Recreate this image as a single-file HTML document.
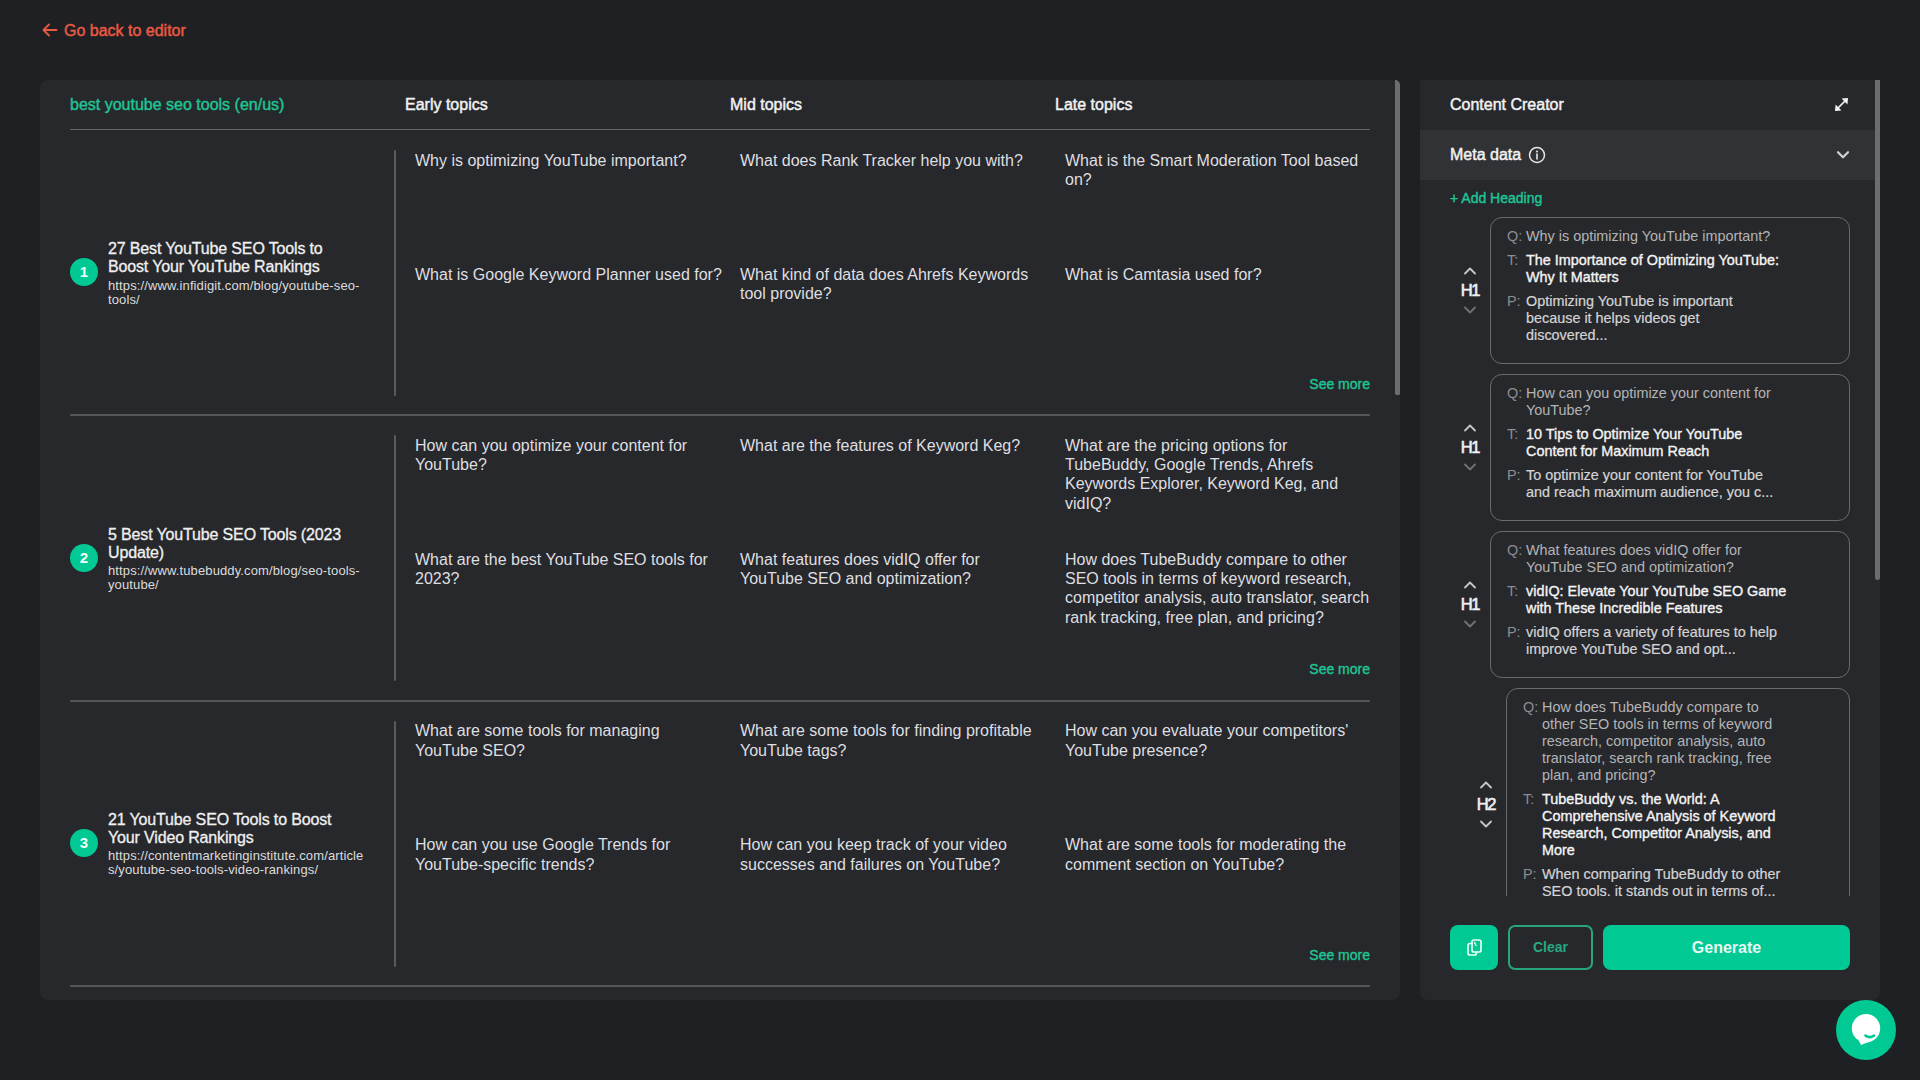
<!DOCTYPE html><html><head><meta charset="utf-8"><style>
html,body{margin:0;padding:0;width:1920px;height:1080px;overflow:hidden;background:#1f2024;}
body{font-family:"Liberation Sans",sans-serif;position:relative;}
.t{position:absolute;white-space:nowrap;}
.abs{position:absolute;}
</style></head><body>
<svg class="abs" style="left:40px;top:20px" width="20" height="20" viewBox="0 0 20 20"><path d="M16.5 10H3.5M9 4.5L3.5 10L9 15.5" stroke="#e85a43" stroke-width="1.8" fill="none" stroke-linecap="round" stroke-linejoin="round"/></svg>
<div class="t" style="left:64px;top:20.96px;font-size:16px;line-height:19px;color:#e85a43;font-weight:400;-webkit-text-stroke:0.45px #e85a43;">Go back to editor</div>
<div class="abs" style="left:40px;top:80px;width:1360px;height:920px;background:#27282c;border-radius:8px;"></div>
<div class="abs" style="left:1395px;top:80px;width:5px;height:314.5px;background:#6c6d71;border-radius:0 8px 3px 3px;"></div>
<div class="t" style="left:70px;top:95.26px;font-size:16px;line-height:19px;color:#1ec695;font-weight:400;-webkit-text-stroke:0.4px #1ec695;">best youtube seo tools (en/us)</div>
<div class="t" style="left:405px;top:95.26px;font-size:16px;line-height:19px;color:#f2f2f2;font-weight:400;-webkit-text-stroke:0.45px #f2f2f2;">Early topics</div>
<div class="t" style="left:730px;top:95.26px;font-size:16px;line-height:19px;color:#f2f2f2;font-weight:400;-webkit-text-stroke:0.45px #f2f2f2;">Mid topics</div>
<div class="t" style="left:1055px;top:95.26px;font-size:16px;line-height:19px;color:#f2f2f2;font-weight:400;-webkit-text-stroke:0.45px #f2f2f2;">Late topics</div>
<div class="abs" style="left:70px;top:129px;width:1300px;height:1px;background:#65666a;"></div>
<div class="abs" style="left:70px;top:258.2px;width:28px;height:28px;border-radius:50%;background:#00c993;color:#f4fffb;font-size:15px;font-weight:700;line-height:28px;text-align:center;">1</div>
<div class="t" style="left:108px;top:240.16px;font-size:16px;line-height:18px;color:#f0f0f0;font-weight:400;letter-spacing:-0.15px;-webkit-text-stroke:0.3px #f0f0f0;">27 Best YouTube SEO Tools to<br>Boost Your YouTube Rankings</div>
<div class="t" style="left:108px;top:278.50px;font-size:13px;line-height:14px;color:#dcdcdc;font-weight:400;letter-spacing:0.12px;">https://www.infidigit.com/blog/youtube-seo-<br>tools/</div>
<div class="abs" style="left:393.5px;top:149.7px;width:2.5px;height:246px;background:#5a5b5f;border-radius:2px;"></div>
<div class="t" style="left:415px;top:150.56px;font-size:16px;line-height:19.2px;color:#dedfe0;font-weight:400;">Why is optimizing YouTube important?</div>
<div class="t" style="left:740px;top:150.56px;font-size:16px;line-height:19.2px;color:#dedfe0;font-weight:400;">What does Rank Tracker help you with?</div>
<div class="t" style="left:1065px;top:150.56px;font-size:16px;line-height:19.2px;color:#dedfe0;font-weight:400;">What is the Smart Moderation Tool based<br>on?</div>
<div class="t" style="left:415px;top:264.56px;font-size:16px;line-height:19.2px;color:#dedfe0;font-weight:400;">What is Google Keyword Planner used for?</div>
<div class="t" style="left:740px;top:264.56px;font-size:16px;line-height:19.2px;color:#dedfe0;font-weight:400;">What kind of data does Ahrefs Keywords<br>tool provide?</div>
<div class="t" style="left:1065px;top:264.56px;font-size:16px;line-height:19.2px;color:#dedfe0;font-weight:400;">What is Camtasia used for?</div>
<div class="t" style="right:550px;text-align:right;top:375.95px;font-size:14px;line-height:17px;color:#1ec695;font-weight:400;-webkit-text-stroke:0.35px #1ec695;">See more</div>
<div class="abs" style="left:70px;top:414.1px;width:1300px;height:2px;background:#55565a;border-radius:1px;"></div>
<div class="abs" style="left:70px;top:543.5999999999999px;width:28px;height:28px;border-radius:50%;background:#00c993;color:#f4fffb;font-size:15px;font-weight:700;line-height:28px;text-align:center;">2</div>
<div class="t" style="left:108px;top:525.56px;font-size:16px;line-height:18px;color:#f0f0f0;font-weight:400;letter-spacing:-0.15px;-webkit-text-stroke:0.3px #f0f0f0;">5 Best YouTube SEO Tools (2023<br>Update)</div>
<div class="t" style="left:108px;top:563.90px;font-size:13px;line-height:14px;color:#dcdcdc;font-weight:400;letter-spacing:0.12px;">https://www.tubebuddy.com/blog/seo-tools-<br>youtube/</div>
<div class="abs" style="left:393.5px;top:435.09999999999997px;width:2.5px;height:246px;background:#5a5b5f;border-radius:2px;"></div>
<div class="t" style="left:415px;top:435.96px;font-size:16px;line-height:19.2px;color:#dedfe0;font-weight:400;">How can you optimize your content for<br>YouTube?</div>
<div class="t" style="left:740px;top:435.96px;font-size:16px;line-height:19.2px;color:#dedfe0;font-weight:400;">What are the features of Keyword Keg?</div>
<div class="t" style="left:1065px;top:435.96px;font-size:16px;line-height:19.2px;color:#dedfe0;font-weight:400;">What are the pricing options for<br>TubeBuddy, Google Trends, Ahrefs<br>Keywords Explorer, Keyword Keg, and<br>vidIQ?</div>
<div class="t" style="left:415px;top:549.96px;font-size:16px;line-height:19.2px;color:#dedfe0;font-weight:400;">What are the best YouTube SEO tools for<br>2023?</div>
<div class="t" style="left:740px;top:549.96px;font-size:16px;line-height:19.2px;color:#dedfe0;font-weight:400;">What features does vidIQ offer for<br>YouTube SEO and optimization?</div>
<div class="t" style="left:1065px;top:549.96px;font-size:16px;line-height:19.2px;color:#dedfe0;font-weight:400;">How does TubeBuddy compare to other<br>SEO tools in terms of keyword research,<br>competitor analysis, auto translator, search<br>rank tracking, free plan, and pricing?</div>
<div class="t" style="right:550px;text-align:right;top:661.35px;font-size:14px;line-height:17px;color:#1ec695;font-weight:400;-webkit-text-stroke:0.35px #1ec695;">See more</div>
<div class="abs" style="left:70px;top:699.5px;width:1300px;height:2px;background:#55565a;border-radius:1px;"></div>
<div class="abs" style="left:70px;top:829.0px;width:28px;height:28px;border-radius:50%;background:#00c993;color:#f4fffb;font-size:15px;font-weight:700;line-height:28px;text-align:center;">3</div>
<div class="t" style="left:108px;top:810.96px;font-size:16px;line-height:18px;color:#f0f0f0;font-weight:400;letter-spacing:-0.15px;-webkit-text-stroke:0.3px #f0f0f0;">21 YouTube SEO Tools to Boost<br>Your Video Rankings</div>
<div class="t" style="left:108px;top:849.30px;font-size:13px;line-height:14px;color:#dcdcdc;font-weight:400;letter-spacing:0.12px;">https://contentmarketinginstitute.com/article<br>s/youtube-seo-tools-video-rankings/</div>
<div class="abs" style="left:393.5px;top:720.5px;width:2.5px;height:246px;background:#5a5b5f;border-radius:2px;"></div>
<div class="t" style="left:415px;top:721.36px;font-size:16px;line-height:19.2px;color:#dedfe0;font-weight:400;">What are some tools for managing<br>YouTube SEO?</div>
<div class="t" style="left:740px;top:721.36px;font-size:16px;line-height:19.2px;color:#dedfe0;font-weight:400;">What are some tools for finding profitable<br>YouTube tags?</div>
<div class="t" style="left:1065px;top:721.36px;font-size:16px;line-height:19.2px;color:#dedfe0;font-weight:400;">How can you evaluate your competitors'<br>YouTube presence?</div>
<div class="t" style="left:415px;top:835.36px;font-size:16px;line-height:19.2px;color:#dedfe0;font-weight:400;">How can you use Google Trends for<br>YouTube-specific trends?</div>
<div class="t" style="left:740px;top:835.36px;font-size:16px;line-height:19.2px;color:#dedfe0;font-weight:400;">How can you keep track of your video<br>successes and failures on YouTube?</div>
<div class="t" style="left:1065px;top:835.36px;font-size:16px;line-height:19.2px;color:#dedfe0;font-weight:400;">What are some tools for moderating the<br>comment section on YouTube?</div>
<div class="t" style="right:550px;text-align:right;top:946.75px;font-size:14px;line-height:17px;color:#1ec695;font-weight:400;-webkit-text-stroke:0.35px #1ec695;">See more</div>
<div class="abs" style="left:70px;top:984.9px;width:1300px;height:2px;background:#55565a;border-radius:1px;"></div>
<div class="abs" style="left:1420px;top:80px;width:460px;height:920px;background:#27282c;border-radius:0 0 8px 8px;overflow:hidden;"><div class="abs" style="left:0;top:50px;width:455px;height:50px;background:#313236;"></div><div class="abs" style="left:455px;top:0;width:5px;height:500px;background:#6c6d71;border-radius:0 0 3px 3px;"></div></div>
<div class="t" style="left:1450px;top:95.46px;font-size:16px;line-height:19px;color:#f2f2f2;font-weight:400;-webkit-text-stroke:0.45px #f2f2f2;">Content Creator</div>
<svg class="abs" style="left:1833px;top:96px" width="17" height="17" viewBox="0 0 17 17"><path d="M4.5 12.5L12.5 4.5" stroke="#f4f4f4" stroke-width="1.7" fill="none"/><path d="M15 2L8.6 2.6L14.4 8.4Z" fill="#f4f4f4"/><path d="M2 15L2.6 8.6L8.4 14.4Z" fill="#f4f4f4"/></svg>
<div class="t" style="left:1450px;top:144.96px;font-size:16px;line-height:19px;color:#f2f2f2;font-weight:400;-webkit-text-stroke:0.45px #f2f2f2;">Meta data</div>
<svg class="abs" style="left:1528px;top:146px" width="18" height="18" viewBox="0 0 18 18"><circle cx="9" cy="9" r="7.5" stroke="#e8e8e8" stroke-width="1.5" fill="none"/><path d="M9 8V13" stroke="#e8e8e8" stroke-width="1.6" stroke-linecap="round"/><circle cx="9" cy="5.5" r="1" fill="#e8e8e8"/></svg>
<svg class="abs" style="left:1835px;top:148px" width="16" height="14" viewBox="0 0 16 14"><path d="M3 4.2L8 9.2L13 4.2" stroke="#d0d0d0" stroke-width="2.3" fill="none" stroke-linecap="round" stroke-linejoin="round"/></svg>
<div class="t" style="left:1450px;top:189.85px;font-size:14px;line-height:17px;color:#1ec695;font-weight:400;-webkit-text-stroke:0.4px #1ec695;">+ Add Heading</div>
<div class="abs" style="left:1420px;top:210px;width:455px;height:686px;overflow:hidden;">
<div class="abs" style="left:70px;top:7px;width:358px;height:145px;border:1px solid #6a6b6e;border-radius:12px;"></div>
<div class="t" style="left:30px;width:40px;text-align:center;top:69.5px;font-size:16.5px;line-height:20px;color:#f0f0f0;font-weight:400;letter-spacing:-1.2px;-webkit-text-stroke:0.6px #f0f0f0;">H1</div>
<svg class="abs" style="left:42px;top:55.5px" width="16" height="10" viewBox="0 0 16 10"><path d="M3 7.5L8 2.5L13 7.5" stroke="#c8c8c8" stroke-width="1.8" fill="none" stroke-linecap="round" stroke-linejoin="round"/></svg>
<svg class="abs" style="left:42px;top:94.5px" width="16" height="10" viewBox="0 0 16 10"><path d="M3 2.5L8 7.5L13 2.5" stroke="#737375" stroke-width="1.8" fill="none" stroke-linecap="round" stroke-linejoin="round"/></svg>
<div class="t" style="left:87px;top:18.11px;font-size:14.4px;line-height:17px;color:#8d8d8f;">Q:</div>
<div class="t" style="left:106px;top:18.11px;font-size:14.4px;line-height:17px;color:#b4b4b6;font-weight:400;">Why is optimizing YouTube important?</div>
<div class="t" style="left:87px;top:42.11px;font-size:14.4px;line-height:17px;color:#8d8d8f;">T:</div>
<div class="t" style="left:106px;top:42.11px;font-size:14.4px;line-height:17px;color:#f4f4f4;font-weight:500;-webkit-text-stroke:0.35px #f4f4f4;">The Importance of Optimizing YouTube:<br>Why It Matters</div>
<div class="t" style="left:87px;top:83.11px;font-size:14.4px;line-height:17px;color:#8d8d8f;">P:</div>
<div class="t" style="left:106px;top:83.11px;font-size:14.4px;line-height:17px;color:#d4d4d6;font-weight:400;-webkit-text-stroke:0.2px #d4d4d6;">Optimizing YouTube is important<br>because it helps videos get<br>discovered...</div>
<div class="abs" style="left:70px;top:164px;width:358px;height:145px;border:1px solid #6a6b6e;border-radius:12px;"></div>
<div class="t" style="left:30px;width:40px;text-align:center;top:226.5px;font-size:16.5px;line-height:20px;color:#f0f0f0;font-weight:400;letter-spacing:-1.2px;-webkit-text-stroke:0.6px #f0f0f0;">H1</div>
<svg class="abs" style="left:42px;top:212.5px" width="16" height="10" viewBox="0 0 16 10"><path d="M3 7.5L8 2.5L13 7.5" stroke="#c8c8c8" stroke-width="1.8" fill="none" stroke-linecap="round" stroke-linejoin="round"/></svg>
<svg class="abs" style="left:42px;top:251.5px" width="16" height="10" viewBox="0 0 16 10"><path d="M3 2.5L8 7.5L13 2.5" stroke="#737375" stroke-width="1.8" fill="none" stroke-linecap="round" stroke-linejoin="round"/></svg>
<div class="t" style="left:87px;top:175.11px;font-size:14.4px;line-height:17px;color:#8d8d8f;">Q:</div>
<div class="t" style="left:106px;top:175.11px;font-size:14.4px;line-height:17px;color:#b4b4b6;font-weight:400;">How can you optimize your content for<br>YouTube?</div>
<div class="t" style="left:87px;top:216.11px;font-size:14.4px;line-height:17px;color:#8d8d8f;">T:</div>
<div class="t" style="left:106px;top:216.11px;font-size:14.4px;line-height:17px;color:#f4f4f4;font-weight:500;-webkit-text-stroke:0.35px #f4f4f4;">10 Tips to Optimize Your YouTube<br>Content for Maximum Reach</div>
<div class="t" style="left:87px;top:257.11px;font-size:14.4px;line-height:17px;color:#8d8d8f;">P:</div>
<div class="t" style="left:106px;top:257.11px;font-size:14.4px;line-height:17px;color:#d4d4d6;font-weight:400;-webkit-text-stroke:0.2px #d4d4d6;">To optimize your content for YouTube<br>and reach maximum audience, you c...</div>
<div class="abs" style="left:70px;top:321px;width:358px;height:145px;border:1px solid #6a6b6e;border-radius:12px;"></div>
<div class="t" style="left:30px;width:40px;text-align:center;top:383.5px;font-size:16.5px;line-height:20px;color:#f0f0f0;font-weight:400;letter-spacing:-1.2px;-webkit-text-stroke:0.6px #f0f0f0;">H1</div>
<svg class="abs" style="left:42px;top:369.5px" width="16" height="10" viewBox="0 0 16 10"><path d="M3 7.5L8 2.5L13 7.5" stroke="#c8c8c8" stroke-width="1.8" fill="none" stroke-linecap="round" stroke-linejoin="round"/></svg>
<svg class="abs" style="left:42px;top:408.5px" width="16" height="10" viewBox="0 0 16 10"><path d="M3 2.5L8 7.5L13 2.5" stroke="#737375" stroke-width="1.8" fill="none" stroke-linecap="round" stroke-linejoin="round"/></svg>
<div class="t" style="left:87px;top:332.11px;font-size:14.4px;line-height:17px;color:#8d8d8f;">Q:</div>
<div class="t" style="left:106px;top:332.11px;font-size:14.4px;line-height:17px;color:#b4b4b6;font-weight:400;">What features does vidIQ offer for<br>YouTube SEO and optimization?</div>
<div class="t" style="left:87px;top:373.11px;font-size:14.4px;line-height:17px;color:#8d8d8f;">T:</div>
<div class="t" style="left:106px;top:373.11px;font-size:14.4px;line-height:17px;color:#f4f4f4;font-weight:500;-webkit-text-stroke:0.35px #f4f4f4;">vidIQ: Elevate Your YouTube SEO Game<br>with These Incredible Features</div>
<div class="t" style="left:87px;top:414.11px;font-size:14.4px;line-height:17px;color:#8d8d8f;">P:</div>
<div class="t" style="left:106px;top:414.11px;font-size:14.4px;line-height:17px;color:#d4d4d6;font-weight:400;-webkit-text-stroke:0.2px #d4d4d6;">vidIQ offers a variety of features to help<br>improve YouTube SEO and opt...</div>
<div class="abs" style="left:86px;top:478px;width:342px;height:231px;border:1px solid #6a6b6e;border-radius:12px;"></div>
<div class="t" style="left:46px;width:40px;text-align:center;top:583.5px;font-size:16.5px;line-height:20px;color:#f0f0f0;font-weight:400;letter-spacing:-1.2px;-webkit-text-stroke:0.6px #f0f0f0;">H2</div>
<svg class="abs" style="left:58px;top:569.5px" width="16" height="10" viewBox="0 0 16 10"><path d="M3 7.5L8 2.5L13 7.5" stroke="#c8c8c8" stroke-width="1.8" fill="none" stroke-linecap="round" stroke-linejoin="round"/></svg>
<svg class="abs" style="left:58px;top:608.5px" width="16" height="10" viewBox="0 0 16 10"><path d="M3 2.5L8 7.5L13 2.5" stroke="#c8c8c8" stroke-width="1.8" fill="none" stroke-linecap="round" stroke-linejoin="round"/></svg>
<div class="t" style="left:103px;top:489.11px;font-size:14.4px;line-height:17px;color:#8d8d8f;">Q:</div>
<div class="t" style="left:122px;top:489.11px;font-size:14.4px;line-height:17px;color:#b4b4b6;font-weight:400;">How does TubeBuddy compare to<br>other SEO tools in terms of keyword<br>research, competitor analysis, auto<br>translator, search rank tracking, free<br>plan, and pricing?</div>
<div class="t" style="left:103px;top:581.11px;font-size:14.4px;line-height:17px;color:#8d8d8f;">T:</div>
<div class="t" style="left:122px;top:581.11px;font-size:14.4px;line-height:17px;color:#f4f4f4;font-weight:500;-webkit-text-stroke:0.35px #f4f4f4;">TubeBuddy vs. the World: A<br>Comprehensive Analysis of Keyword<br>Research, Competitor Analysis, and<br>More</div>
<div class="t" style="left:103px;top:656.11px;font-size:14.4px;line-height:17px;color:#8d8d8f;">P:</div>
<div class="t" style="left:122px;top:656.11px;font-size:14.4px;line-height:17px;color:#d4d4d6;font-weight:400;-webkit-text-stroke:0.2px #d4d4d6;">When comparing TubeBuddy to other<br>SEO tools, it stands out in terms of...</div>
</div>
<div class="abs" style="left:1450px;top:925px;width:48px;height:45px;background:#00c993;border-radius:8px;"></div>
<svg class="abs" style="left:1462px;top:936px" width="24" height="24" viewBox="0 0 24 24" fill="none" stroke="#e6fff6" stroke-width="1.7" stroke-linejoin="round" stroke-linecap="round"><path d="M10 7.5H8A2 2 0 0 0 6 9.5V17A2 2 0 0 0 8 19H12.5A2 2 0 0 0 14.5 17V16"/><path d="M12 4H17A2 2 0 0 1 19 6V14A2 2 0 0 1 17 16H12A2 2 0 0 1 10 14V6A2 2 0 0 1 12 4Z"/><path d="M12.5 6.5L14 9.5" stroke-width="1.4"/></svg>
<div class="abs" style="left:1508px;top:925px;width:81px;height:41px;border:2px solid #28a47f;border-radius:7px;color:#25a983;font-size:14px;font-weight:700;line-height:41px;text-align:center;">Clear</div>
<div class="abs" style="left:1603px;top:925px;width:247px;height:45px;background:#00c993;border-radius:8px;color:#e9f7f1;font-size:16px;font-weight:700;line-height:45px;text-align:center;">Generate</div>
<div class="abs" style="left:1836px;top:1000px;width:60px;height:60px;border-radius:50%;background:#00c993;"></div>
<svg class="abs" style="left:1836px;top:1000px" width="60" height="60" viewBox="0 0 60 60"><circle cx="30" cy="28.2" r="14.2" fill="#ffffff"/><path d="M21 37L25 45L35 41Z" fill="#ffffff"/><path d="M29.5 35.6Q33.8 38.6 38 35.6" stroke="#00c993" stroke-width="2.6" fill="none" stroke-linecap="round"/></svg>
</body></html>
